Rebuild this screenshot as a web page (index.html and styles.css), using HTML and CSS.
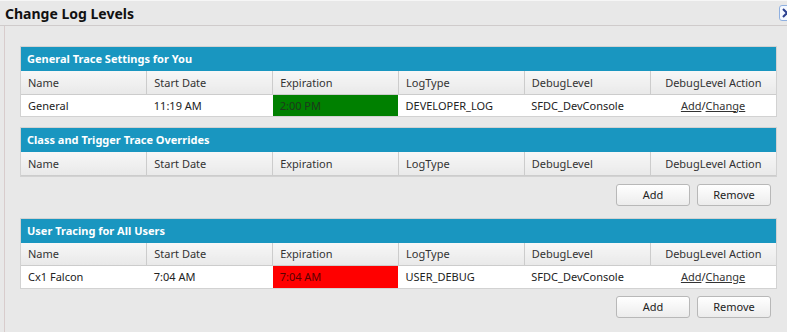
FILE: index.html
```html
<!DOCTYPE html>
<html lang="en">
<head>
    <meta charset="UTF-8">
    <meta name="viewport" content="width=device-width, initial-scale=1.0">
    <title>Change Log Levels</title>
    <link rel="stylesheet" href="styles.css">
</head>
<body>

    <div class="titlebar">
        <h1>Change Log Levels</h1>
        <span class="close">
            <svg width="14" height="14" viewBox="0 0 14 14">
                <path d="M3 3 L11 11 M11 3 L3 11" stroke="#2a3f8f" stroke-width="2" fill="none" />
            </svg>
        </span>
    </div>

    <div class="content">
        <!-- Cài đặt trace chung -->
        <div class="panel">
            <div class="panel-title">General Trace Settings for You</div>
            <table>
                <tr class="head">
                    <th>Name</th>
                    <th>Start Date</th>
                    <th>Expiration</th>
                    <th>LogType</th>
                    <th>DebugLevel</th>
                    <th class="center">DebugLevel Action</th>
                </tr>
                <tr>
                    <td>General</td>
                    <td>11:19 AM</td>
                    <td class="ok">2:00 PM</td>
                    <td>DEVELOPER_LOG</td>
                    <td>SFDC_DevConsole</td>
                    <td class="center"><a href="#">Add</a>/<a href="#">Change</a></td>
                </tr>
            </table>
        </div>

        <div class="panel">
            <div class="panel-title">Class and Trigger Trace Overrides</div>
            <table>
                <tr class="head">
                    <th>Name</th>
                    <th>Start Date</th>
                    <th>Expiration</th>
                    <th>LogType</th>
                    <th>DebugLevel</th>
                    <th class="center">DebugLevel Action</th>
                </tr>
            </table>
        </div>
        <div class="actions">
            <button>Add</button>
            <button>Remove</button>
        </div>

        <div class="panel">
            <div class="panel-title">User Tracing for All Users</div>
            <table>
                <tr class="head">
                    <th>Name</th>
                    <th>Start Date</th>
                    <th>Expiration</th>
                    <th>LogType</th>
                    <th>DebugLevel</th>
                    <th class="center">DebugLevel Action</th>
                </tr>
                <tr>
                    <td>Cx1 Falcon</td>
                    <td>7:04 AM</td>
                    <td class="expired">7:04 AM</td>
                    <td>USER_DEBUG</td>
                    <td>SFDC_DevConsole</td>
                    <td class="center"><a href="#">Add</a>/<a href="#">Change</a></td>
                </tr>
            </table>
        </div>
        <div class="actions">
            <button>Add</button>
            <button>Remove</button>
        </div>
    </div>

</body>
</html>
```

FILE: styles.css
```css
/* Hộp thoại Change Log Levels */
* {
    box-sizing: border-box;
}

body {
    font-family: "Noto Sans", Arial, sans-serif;
    font-size: 11px;
    color: #222;
    background-color: #e8e8e8;
    margin: 0;
    border-top: 1px solid #f6f6f6;
    height: 100vh;
    overflow: hidden;
}

.titlebar {
    display: flex;
    justify-content: space-between;
    align-items: center;
    height: 25px;
    border-bottom: 1px solid #cfcbcb;
}

.titlebar h1 {
    font-size: 14px;
    font-weight: bold;
    color: #111;
    margin: 0 0 0 5px;
}

.close {
    display: flex;
    align-items: center;
    justify-content: center;
    width: 16px;
    height: 16px;
    margin-right: -8px;
    border: 1px solid #8fb0e0;
    border-radius: 3px;
    background-color: #f4f8ff;
}

.content {
    margin-left: 4px;
    border-left: 1px solid #d8cccc;
    padding: 20px 10px 0 15px;
    height: calc(100vh - 26px);
}

.panel {
    border: 1px solid #d2d2d2;
    background-color: #fff;
    margin-bottom: 10px;
}

.panel-title {
    background-color: #1996c0;
    color: #fff;
    font-weight: bold;
    height: 24px;
    line-height: 24px;
    padding-left: 6px;
}

table {
    width: 100%;
    border-collapse: collapse;
    table-layout: fixed;
}

th, td {
    text-align: left;
    font-weight: normal;
    padding: 0 7px;
    white-space: nowrap;
}

tr.head th {
    height: 23px;
    color: #333;
    background: linear-gradient(#f7f7f7, #e9e9e9);
    border-right: 1px solid #cccccc;
    border-bottom: 1px solid #cccccc;
}

tr.head th:last-child {
    border-right: none;
}

td {
    height: 22px;
}

.center {
    text-align: center;
}

td.ok {
    background-color: #008000;
    color: #1c3a1c;
}

td.expired {
    background-color: #ff0000;
    color: #5a0000;
}

td a {
    color: #333;
}

.actions {
    display: flex;
    justify-content: flex-end;
    gap: 7px;
    padding-right: 6px;
    margin: -3px 0 12px;
}

.actions button {
    width: 74px;
    height: 22px;
    font-family: "Noto Sans", Arial, sans-serif;
    font-size: 11px;
    color: #222;
    border: 1px solid #b8b8b8;
    border-radius: 3px;
    background: linear-gradient(#ffffff, #ececec);
    cursor: pointer;
}
```
